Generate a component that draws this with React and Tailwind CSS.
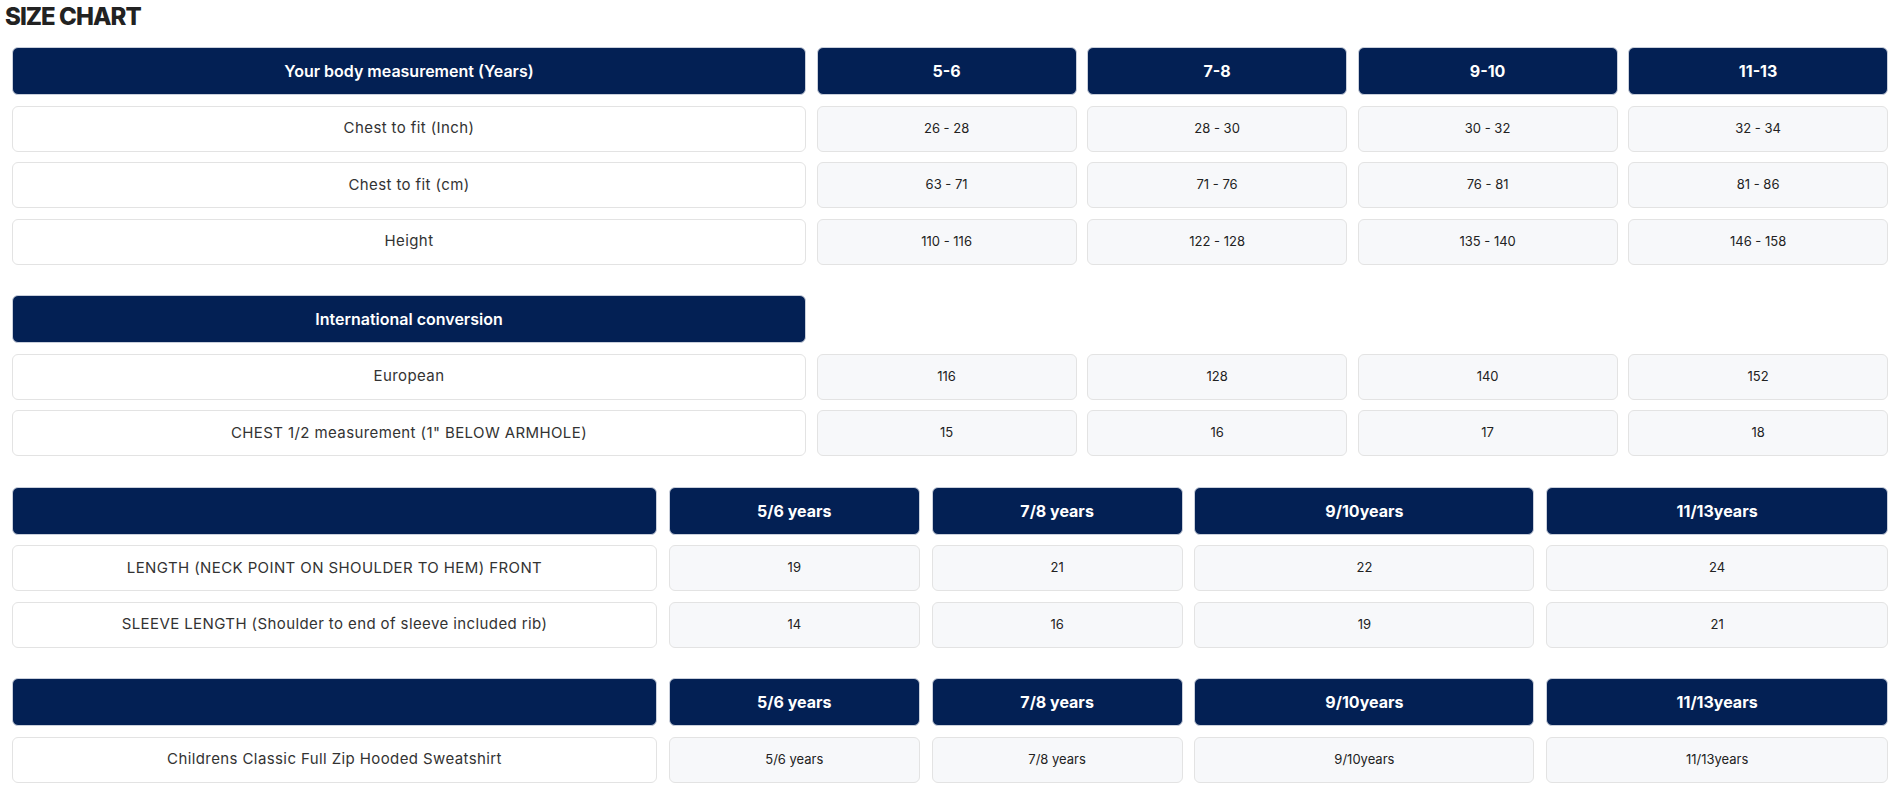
const bodyRows = [
  ["Chest to fit (Inch)", "26 - 28", "28 - 30", "30 - 32", "32 - 34"],
  ["Chest to fit (cm)", "63 - 71", "71 - 76", "76 - 81", "81 - 86"],
  ["Height", "110 - 116", "122 - 128", "135 - 140", "146 - 158"],
];

const intlRows = [
  ["European", "116", "128", "140", "152"],
  ['CHEST 1/2 measurement (1" BELOW ARMHOLE)', "15", "16", "17", "18"],
];

const garmentRows = [
  ["LENGTH (NECK POINT ON SHOULDER TO HEM) FRONT", "19", "21", "22", "24"],
  ["SLEEVE LENGTH (Shoulder to end of sleeve included rib)", "14", "16", "19", "21"],
];

const productRows = [
  ["Childrens Classic Full Zip Hooded Sweatshirt", "5/6 years", "7/8 years", "9/10years", "11/13years"],
];

const yearHeads = ["5/6 years", "7/8 years", "9/10years", "11/13years"];

function HeadCell({ children, wide }) {
  return (
    <div
      className={
        "h-[48px] flex items-center justify-center rounded-[6px] bg-[#032054] border border-[#c9cfdb] text-white " +
        (wide ? "text-[16px] font-semibold" : "text-[16px] font-bold")
      }
    >
      {children}
    </div>
  );
}

function LabelCell({ children }) {
  return (
    <div className="h-[46px] flex items-center justify-center rounded-[6px] bg-white border border-[#e3e3e3] text-[15px] tracking-[0.4px] font-normal text-[#333333]">
      {children}
    </div>
  );
}

function ValueCell({ children }) {
  return (
    <div className="h-[46px] flex items-center justify-center rounded-[6px] bg-[#f7f8fa] border border-[#e3e3e3] text-[13px] text-[#222222]">
      {children}
    </div>
  );
}

function Rows({ rows }) {
  return rows.map((r, i) => (
    <div key={i} className="contents">
      <LabelCell>{r[0]}</LabelCell>
      {r.slice(1).map((v, j) => (
        <ValueCell key={j}>{v}</ValueCell>
      ))}
    </div>
  ));
}

export default function App() {
  return (
    <div
      className="min-h-screen bg-white pl-[5px] pr-[4px] pb-[8px]"
      style={{ fontFamily: "Inter, 'Open Sans', sans-serif" }}
    >
      <h1 className="pt-[5px] text-[24px] leading-[24px] font-extrabold tracking-[-0.04em] text-[#222222]">SIZE CHART</h1>

      <div className="pl-[7px] pt-[18px] flex flex-col gap-[30.5px]">
        {/* body measurements */}
        <div className="grid grid-cols-[794px_1fr_1fr_1fr_1fr] gap-x-[10.7px] gap-y-[10.5px]">
          <HeadCell wide>Your body measurement (Years)</HeadCell>
          <HeadCell>5-6</HeadCell>
          <HeadCell>7-8</HeadCell>
          <HeadCell>9-10</HeadCell>
          <HeadCell>11-13</HeadCell>
          <Rows rows={bodyRows} />
        </div>

        {/* international */}
        <div className="grid grid-cols-[794px_1fr_1fr_1fr_1fr] gap-x-[10.7px] gap-y-[10.5px]">
          <HeadCell wide>International conversion</HeadCell>
          <div className="col-span-4" />
          <Rows rows={intlRows} />
        </div>

        {/* garment measurements */}
        <div className="grid grid-cols-[645px_251px_251px_340px_1fr] gap-x-[11.8px] gap-y-[10.5px]">
          <HeadCell wide></HeadCell>
          {yearHeads.map((h) => (
            <HeadCell key={h}>{h}</HeadCell>
          ))}
          <Rows rows={garmentRows} />
        </div>

        <div className="grid grid-cols-[645px_251px_251px_340px_1fr] gap-x-[11.8px] gap-y-[10.5px]">
          <HeadCell wide></HeadCell>
          {yearHeads.map((h) => (
            <HeadCell key={h}>{h}</HeadCell>
          ))}
          <Rows rows={productRows} />
        </div>
      </div>
    </div>
  );
}
